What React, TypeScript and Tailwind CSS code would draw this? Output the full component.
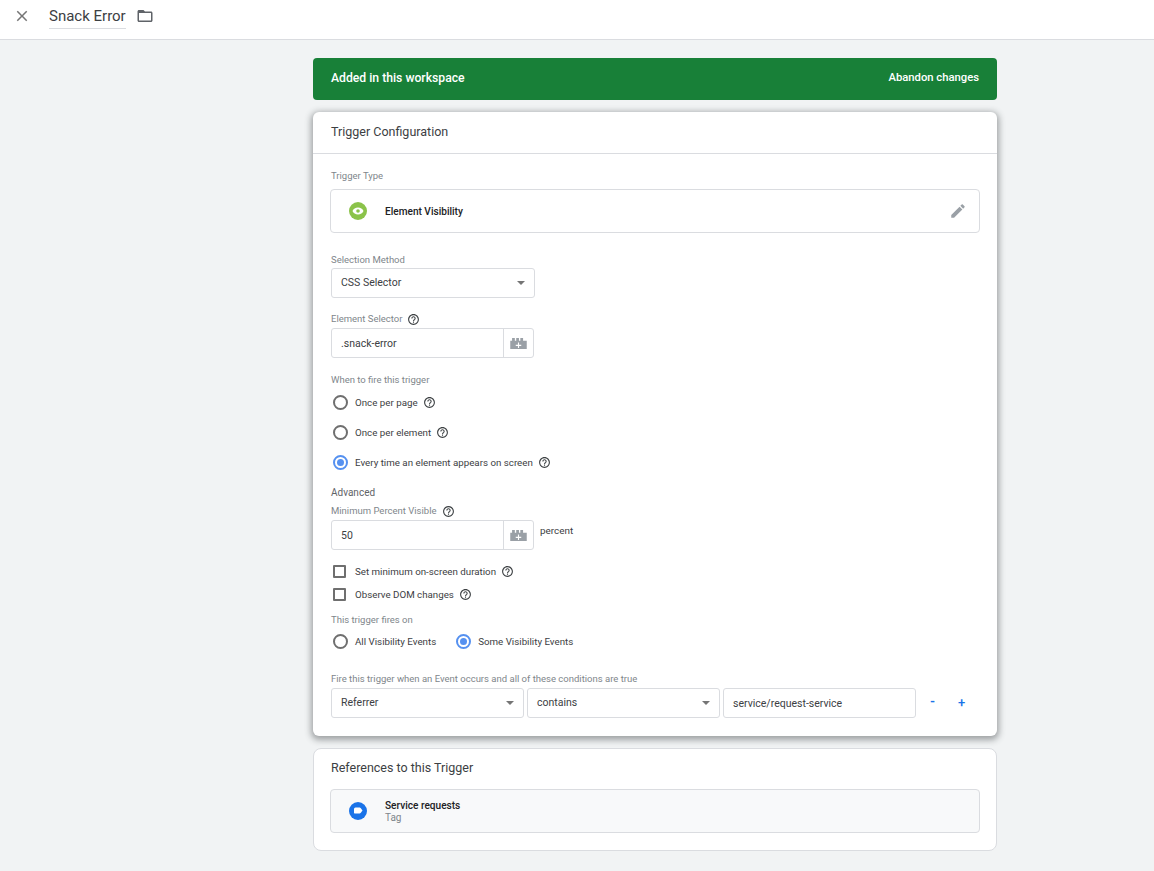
const helpPath =
  "M11 18h2v-2h-2v2zm1-16C6.48 2 2 6.48 2 12s4.48 10 10 10 10-4.48 10-10S17.52 2 12 2zm0 18c-4.41 0-8-3.59-8-8s3.59-8 8-8 8 3.59 8 8-3.59 8-8 8zm0-14c-2.21 0-4 1.79-4 4h2c0-1.1.9-2 2-2s2 .9 2 2c0 2-3 1.75-3 5h2c0-2.25 3-2.5 3-5 0-2.21-1.79-4-4-4z";

function Help() {
  return (
    <svg viewBox="0 0 24 24" className="ml-[5px] h-[13px] w-[13px] shrink-0" fill="#3c4043">
      <path d={helpPath} />
    </svg>
  );
}

function Brick() {
  return (
    <svg viewBox="0 0 18 12" className="h-[11px] w-[17px]">
      <path
        fill="#9aa0a6"
        d="M0 3h2V0h3v3h1.5V0h3v3H11V0h3v3h4v9H0z"
      />
      <path fill="#fff" d="M8.4 5h1.2v2.4H12v1.2H9.6V11H8.4V8.6H6V7.4h2.4z" />
    </svg>
  );
}

function Caret() {
  return <span className="h-0 w-0 border-x-[4px] border-t-[4px] border-x-transparent border-t-[#757575]" />;
}

function Radio({ checked, label, help }: { checked?: boolean; label: string; help?: boolean }) {
  return (
    <div className="flex h-5 items-center">
      <span
        className={
          checked
            ? "flex h-[15px] w-[15px] items-center justify-center rounded-full border-2 border-[#5691f0]"
            : "h-[15px] w-[15px] rounded-full border-2 border-[#6f6f6f]"
        }
      >
        {checked && <span className="h-[7px] w-[7px] rounded-full bg-[#5691f0]" />}
      </span>
      <span className="ml-[7px] pt-[2px] text-[9.75px] text-[#3c4043]">{label}</span>
      {help && <Help />}
    </div>
  );
}

function Checkbox({ label }: { label: string }) {
  return (
    <div className="flex h-5 items-center">
      <span className="ml-[2px] h-[13px] w-[13px] rounded-[1px] border-2 border-[#6f6f6f]" />
      <span className="ml-[9px] pt-[2px] text-[9.75px] text-[#3c4043]">{label}</span>
      <Help />
    </div>
  );
}

function Label({ children, help }: { children: string; help?: boolean }) {
  return (
    <div className="flex h-[14px] items-center text-[9.5px] text-[#80868b]">
      <span>{children}</span>
      {help && <Help />}
    </div>
  );
}

function SelectBox({ label, width }: { label: string; width: string }) {
  return (
    <div className={`flex h-[30px] items-center justify-between rounded-[3px] border border-[#dadce0] bg-white pl-[9px] pr-[9px] text-[10.5px] text-[#3c4043] ${width}`}>
      {label}
      <Caret />
    </div>
  );
}

function BrickInput({ value }: { value: string }) {
  return (
    <div className="flex h-[30px] w-[203px] items-center rounded-[3px] border border-[#dadce0] bg-white text-[10.5px] text-[#3c4043]">
      <span className="flex-1 pl-[9px] pt-[2px]">{value}</span>
      <span className="flex h-full w-[30px] items-center justify-center border-l border-[#dadce0]">
        <Brick />
      </span>
    </div>
  );
}

export default function App() {
  return (
    <div className="min-h-screen bg-[#f1f3f4] font-['Roboto',sans-serif]">
      <header className="flex h-10 items-start border-b border-[#dadce0] bg-white pt-[3px]">
        <div className="flex h-[26px] items-center">
          <svg viewBox="0 0 24 24" className="ml-[13px] h-[18px] w-[18px]" fill="#757575">
            <path d="M19 6.41L17.59 5 12 10.59 6.41 5 5 6.41 10.59 12 5 17.59 6.41 19 12 13.41 17.59 19 19 17.59 13.41 12z" />
          </svg>
          <div className="ml-[18px] flex h-[26px] items-center border-b border-[#dadce0] pt-[2px] text-[15px] text-[#3c4043]">
            Snack Error
          </div>
          <svg viewBox="0 0 24 24" className="ml-[10px] h-[18px] w-[18px]" fill="#5f6368">
            <path d="M20 6h-8l-2-2H4c-1.1 0-1.99.9-1.99 2L2 18c0 1.1.9 2 2 2h16c1.1 0 2-.9 2-2V8c0-1.1-.9-2-2-2zm0 12H4V8h16v10z" />
          </svg>
        </div>
      </header>

      <main className="ml-[313px] w-[684px] pb-5 pt-[18px]">
        <div className="flex h-[42px] items-center justify-between rounded-[4px] bg-[#188038] px-[18px] pb-[1px] text-[11.25px] font-medium text-white">
          <span className="text-[12.2px]">Added in this workspace</span>
          <span>Abandon changes</span>
        </div>

        <section className="mt-3 h-[624px] rounded-[6px] bg-white shadow-[0_2px_6px_2px_rgba(60,64,67,0.45)]">
          <div className="flex h-[42px] items-center border-b border-[#dadce0] pl-[18px] text-[12.5px] text-[#3c4043]">
            Trigger Configuration
          </div>

          <div className="pl-[18px] pt-[15px]">
            <Label>Trigger Type</Label>
            <div className="-ml-px mt-[6px] flex h-[44px] w-[650px] items-center rounded-[4px] border border-[#dadce0] pl-[18px] pr-[12px]">
              <svg viewBox="0 0 18 18" className="h-[18px] w-[18px]">
                <circle cx="9" cy="9" r="9" fill="#8bc34a" />
                <path fill="#fff" d="M9 5.5C6.5 5.5 4.4 7 3.5 9c.9 2 3 3.5 5.5 3.5s4.6-1.500 5.500-3.500c-.9-2-3-3.500-5.500-3.500z" />
                <circle cx="9" cy="9" r="1.800" fill="#8bc34a" />
              </svg>
              <span className="ml-[18px] flex-1 pt-[2px] text-[10.1px] font-medium text-[#202124]">Element Visibility</span>
              <svg viewBox="0 0 24 24" className="h-[18px] w-[18px]" fill="#9aa0a6">
                <path d="M3 17.250V21h3.750L17.810 9.940l-3.750-3.750L3 17.250zM20.710 7.040c.39-.39.39-1.020 0-1.410l-2.340-2.340c-.39-.39-1.020-.39-1.410 0l-1.830 1.830 3.750 3.750 1.830-1.830z" />
              </svg>
            </div>

            <div className="mt-5">
              <Label>Selection Method</Label>
            </div>
            <div className="mt-[1px]">
              <SelectBox label="CSS Selector" width="w-[204px]" />
            </div>

            <div className="mt-[14px]">
              <Label help>Element Selector</Label>
            </div>
            <div className="mt-[2px]">
              <BrickInput value=".snack-error" />
            </div>

            <div className="mt-[15px]">
              <Label>When to fire this trigger</Label>
            </div>
            <div className="ml-[2px] mt-[5px] flex flex-col gap-[10px]">
              <Radio label="Once per page" help />
              <Radio label="Once per element" help />
              <Radio checked label="Every time an element appears on screen" help />
            </div>

            <div className="mt-[13px] flex h-[14px] items-center text-[10px] text-[#5f6368]">Advanced</div>
            <div className="mt-[5px]">
              <Label help>Minimum Percent Visible</Label>
            </div>
            <div className="mt-[2px] flex items-start">
              <BrickInput value="50" />
              <span className="ml-[6px] mt-[4px] text-[9.9px] text-[#3c4043]">percent</span>
            </div>

            <div className="mt-[11px] flex flex-col gap-[3px]">
              <Checkbox label="Set minimum on-screen duration" />
              <Checkbox label="Observe DOM changes" />
            </div>

            <div className="mt-[9px]">
              <Label>This trigger fires on</Label>
            </div>
            <div className="ml-[2px] mt-[4px] flex gap-[20px]">
              <Radio label="All Visibility Events" />
              <Radio checked label="Some Visibility Events" />
            </div>

            <div className="mt-[21px]">
              <Label>Fire this trigger when an Event occurs and all of these conditions are true</Label>
            </div>
            <div className="mt-[2px] flex items-center gap-[3px]">
              <SelectBox label="Referrer" width="w-[193px]" />
              <SelectBox label="contains" width="w-[193px]" />
              <div className="flex h-[30px] w-[193px] items-center rounded-[3px] border border-[#dadce0] pl-[9px] pt-[2px] text-[10.5px] text-[#3c4043]">
                service/request-service
              </div>
              <span className="ml-[11px] w-[7px] pb-[2px] text-[13px] font-bold text-[#1a73e8]">-</span>
              <span className="ml-[18px] text-[13px] font-medium text-[#1a73e8]">+</span>
            </div>
          </div>
        </section>

        <section className="mt-3 h-[103px] rounded-[8px] border border-[#dadce0] bg-white pl-[16px]">
          <div className="flex h-[39px] items-center pl-[1px] text-[12.5px] text-[#3c4043]">References to this Trigger</div>
          <div className="mt-[1px] flex h-[44px] w-[650px] items-center rounded-[4px] border border-[#dadce0] bg-[#f8f9fa] pl-[18px]">
            <svg viewBox="0 0 18 18" className="h-[18px] w-[18px]">
              <circle cx="9" cy="9" r="9" fill="#1a73e8" />
              <path fill="#fff" d="M5 7a1.500 1.500 0 0 1 1.500-1.500h3.500c1 0 1.500.4 2 1l1.500 2-1.500 2c-.5.6-1 1-2 1H6.500A1.500 1.500 0 0 1 5 11z" />
            </svg>
            <div className="ml-[18px] flex flex-col">
              <span className="text-[10.1px] font-medium leading-[13px] text-[#202124]">Service requests</span>
              <span className="text-[10px] leading-[12px] text-[#80868b]">Tag</span>
            </div>
          </div>
        </section>
      </main>
    </div>
  );
}
